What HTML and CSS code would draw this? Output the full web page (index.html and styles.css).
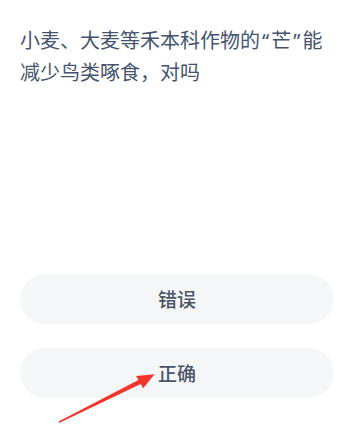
FILE: index.html
```html
<!DOCTYPE html>
<html lang="zh-CN">
<head>
<meta charset="utf-8">
<link rel="stylesheet" href="styles.css">
</head>
<body>
<div class="page">
  <p class="question">小麦、大麦等禾本科作物的<span class="quote">“</span>芒<span class="quote">”</span>能减少鸟类啄食，对吗</p>
  <div class="options">
    <div class="option">错误</div>
    <div class="option">正确</div>
  </div>
  <svg class="arrow" width="351" height="428" viewBox="0 0 351 428">
    <polygon fill="#f2362c" points="58.5,421.6 138.5,379.9 136,376 154.5,374.3 143.2,388.2 140.7,384.1 59.6,422.7"/>
  </svg>
</div>
</body>
</html>
```
FILE: styles.css
```css
html, body {
  margin: 0;
  padding: 0;
  background: #ffffff;
}
.page {
  position: relative;
  width: 351px;
  height: 428px;
  overflow: hidden;
  font-family: "Noto Sans", "Noto Sans CJK SC", sans-serif;
  display: flex;
  flex-direction: column;
}
.question {
  margin: 0;
  padding: 25px 17px 0 20px;
  font-size: 20px;
  line-height: 32px;
  color: #44546f;
}
.quote {
  margin: 0 2px;
}
.options {
  display: flex;
  flex-direction: column;
  gap: 24px;
  margin-top: 185px;
  padding: 0 17px 0 20px;
}
.option {
  height: 50px;
  border-radius: 25px;
  background: #f4f6f8;
  display: flex;
  align-items: center;
  justify-content: center;
  font-size: 19px;
  font-weight: 500;
  color: #4a5566;
}
.arrow {
  position: absolute;
  left: 0;
  top: 0;
  pointer-events: none;
}
```
